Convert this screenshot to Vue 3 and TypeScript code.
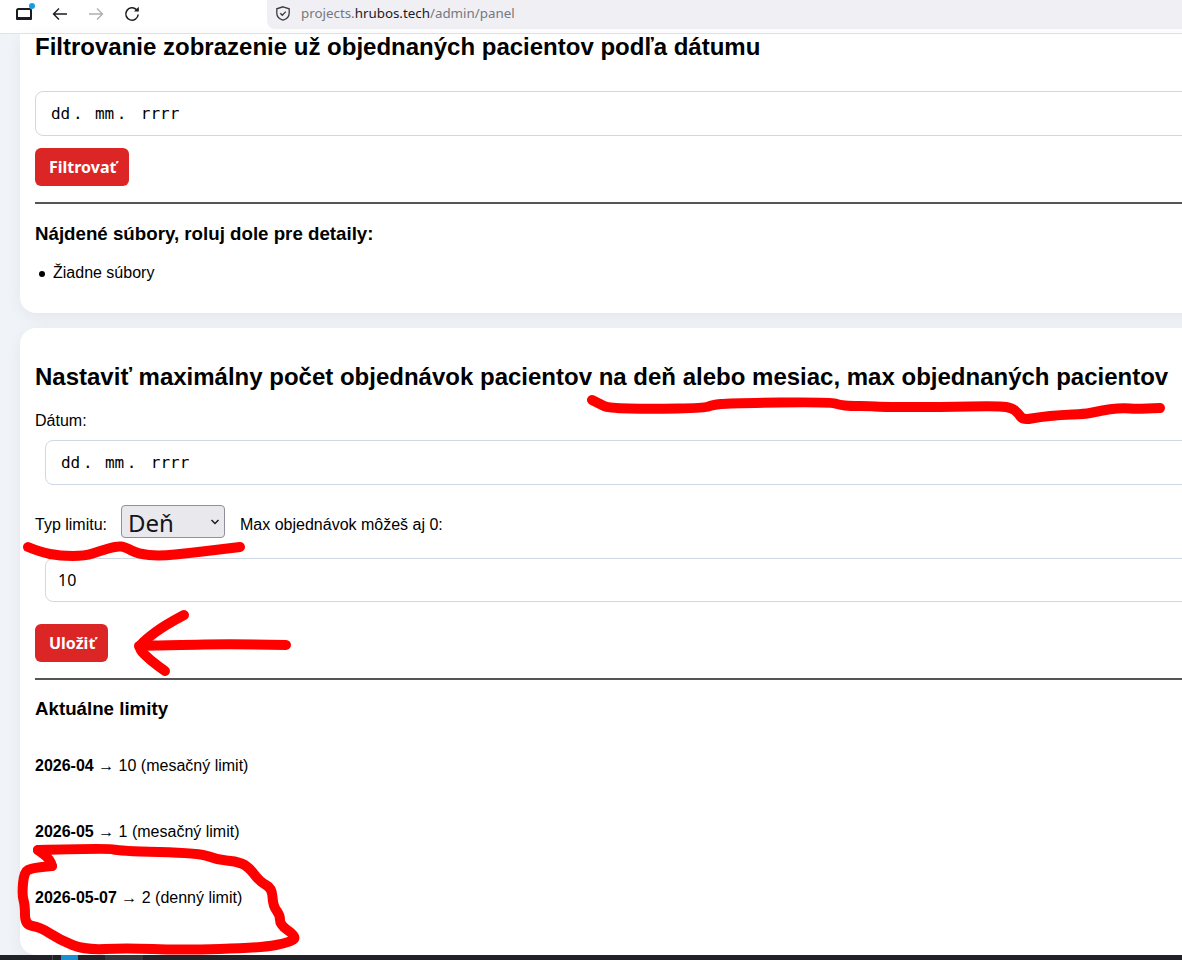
<script setup lang="ts">
type Pt = [number, number]

const limits = [
  { key: '2026-04', text: '10 (mesačný limit)' },
  { key: '2026-05', text: '1 (mesačný limit)' },
  { key: '2026-05-07', text: '2 (denný limit)' },
]

function smooth(pts: Pt[]): string {
  let d = `M${pts[0][0]} ${pts[0][1]}`
  for (let i = 1; i < pts.length - 1; i++) {
    const mx = (pts[i][0] + pts[i + 1][0]) / 2
    const my = (pts[i][1] + pts[i + 1][1]) / 2
    d += ` Q${pts[i][0]} ${pts[i][1]} ${mx} ${my}`
  }
  const last = pts[pts.length - 1]
  return `${d} L${last[0]} ${last[1]}`
}

const strokes: Pt[][] = [
  [[592, 400], [600, 404], [608, 408], [650, 409], [705, 408], [712, 405], [730, 403], [830, 402], [840, 405], [850, 406], [870, 406], [880, 407], [940, 407], [1000, 406], [1012, 408], [1018, 413], [1023, 420], [1040, 417], [1060, 415], [1085, 414], [1095, 412], [1110, 409], [1125, 408], [1135, 409], [1160, 408]],
  [[28, 547], [40, 552], [60, 556], [85, 556], [100, 551], [117, 546], [125, 547], [138, 554], [160, 556], [190, 553], [215, 550], [240, 547]],
  [[286, 645], [240, 644], [170, 645], [139, 646]],
  [[184, 615], [165, 625], [145, 640], [138, 648], [150, 660], [165, 671]],
  [[38, 850], [110, 848], [118, 851], [200, 853], [218, 860], [235, 861], [248, 866], [260, 882], [272, 888], [273, 906], [280, 915], [280, 925], [296, 936], [292, 942], [260, 948], [180, 950], [125, 948], [85, 950], [60, 940], [40, 927], [25, 925], [25, 905], [22, 895], [24, 872], [32, 868], [52, 866]],
  [[52, 866], [50, 859], [38, 850]],
]
const scribbles = strokes.map(smooth)
</script>

<template>
  <div class="page">
    <header class="browser">
      <div class="nav">
        <svg class="sidebar-btn" width="20" height="20" viewBox="0 0 20 20" fill="none">
          <rect x="2" y="5" width="14" height="9.5" rx="1.5" stroke="#1c1b22" stroke-width="2" />
          <rect x="1" y="13" width="16" height="3" rx="1" fill="#1c1b22" />
          <circle cx="17" cy="2" r="3" fill="#1a9be6" />
        </svg>
        <svg width="16" height="14" viewBox="0 0 16 14" fill="none" stroke="#1c1b22" stroke-width="1.4">
          <path d="M1.5 7 H15 M7 1.5 L1.5 7 L7 12.5" />
        </svg>
        <svg width="16" height="14" viewBox="0 0 16 14" fill="none" stroke="#b0b0b4" stroke-width="1.4">
          <path d="M14.5 7 H1 M9 1.5 L14.5 7 L9 12.5" />
        </svg>
        <svg width="16" height="16" viewBox="0 0 16 16" fill="none" stroke="#1c1b22" stroke-width="1.5">
          <path d="M12.4 3.6 A6.2 6.2 0 1 0 14.2 8.5" />
          <path d="M14.8 0.8 V5.6 H10" fill="#1c1b22" stroke="none" />
        </svg>
      </div>
      <div class="url">
        <svg width="14" height="15" viewBox="0 0 14 15" fill="none" stroke="#3a3a40" stroke-width="1.3">
          <path d="M7 0.8 L13.2 2.8 V7 C13.2 10.6 10.4 13.2 7 14.2 C3.6 13.2 0.8 10.6 0.8 7 V2.8 Z" />
          <path d="M4.3 7.2 L6.3 9.3 L9.8 5.6" />
        </svg>
        <span class="url-text">projects.<b>hrubos.tech</b>/admin/panel</span>
      </div>
    </header>

    <main class="content">
      <section class="card card-first">
        <h2 class="title">Filtrovanie zobrazenie už objednaných pacientov podľa dátumu</h2>
        <div class="field date"><span class="seg">dd</span>. <span class="seg">mm</span>. <span class="seg year">rrrr</span></div>
        <button class="btn btn-filter" type="button">Filtrovať</button>
        <hr class="rule rule-first" />
        <h3 class="sub">Nájdené súbory, roluj dole pre detaily:</h3>
        <ul class="files">
          <li><span class="bullet"></span>Žiadne súbory</li>
        </ul>
      </section>

      <section class="card card-second">
        <h2 class="title">Nastaviť maximálny počet objednávok pacientov na deň alebo mesiac, max objednaných pacientov</h2>
        <label class="date-label">Dátum:</label>
        <div class="field date inset"><span class="seg">dd</span>. <span class="seg">mm</span>. <span class="seg year">rrrr</span></div>
        <div class="limit-row">
          <label>Typ limitu:</label>
          <span class="select-wrap">
            <select class="select">
              <option>Deň</option>
              <option>Mesiac</option>
            </select>
            <svg class="chevron" width="10" height="6" viewBox="0 0 10 6" fill="none" stroke="#1c1b22" stroke-width="1.5">
              <path d="M1.5 1 L5 4.5 L8.5 1" />
            </svg>
          </span>
          <label>Max objednávok môžeš aj 0:</label>
        </div>
        <input class="field number inset" type="text" value="10" readonly />
        <button class="btn btn-save" type="button">Uložiť</button>
        <hr class="rule rule-second" />
        <h3 class="sub">Aktuálne limity</h3>
        <div class="limits">
          <p v-for="l in limits" :key="l.key"><strong>{{ l.key }}</strong> <span class="arrow">→</span> {{ l.text }}</p>
        </div>
      </section>
    </main>

    <footer class="taskbar">
      <span class="task-line"></span>
      <span class="task-blue"></span>
      <span class="task-gray"></span>
    </footer>

    <svg class="marks" width="1182" height="960" viewBox="0 0 1182 960" fill="none" stroke="#ff0000" stroke-width="10" stroke-linecap="round" stroke-linejoin="round">
      <path v-for="(d, i) in scribbles" :key="i" :d="d" />
    </svg>
  </div>
</template>

<style>
html, body { margin: 0; background: #f0f4f8; }
</style>

<style scoped>
.page {
  position: relative;
  width: 1182px;
  height: 960px;
  overflow: hidden;
  display: flex;
  flex-direction: column;
  background: #f0f4f8;
  font-family: "Liberation Sans", Arial, sans-serif;
  font-size: 16px;
  color: #000;
}
.browser {
  flex: none;
  height: 34px;
  background: #fff;
  display: flex;
  align-items: flex-start;
  box-sizing: border-box;
  border-bottom: 1px solid #e4e4e6;
}
.nav {
  display: flex;
  align-items: center;
  height: 27px;
  padding-left: 15px;
  width: 267px;
  box-sizing: border-box;
  flex: none;
}
.nav svg { display: block; flex: none; overflow: visible; }
.nav svg:nth-child(1) { margin-right: 17px; }
.nav svg:nth-child(2) { margin-right: 20px; }
.nav svg:nth-child(3) { margin-right: 20px; }
.url {
  flex: 1;
  height: 29px;
  background: #f0f0f4;
  border-radius: 0 0 0 8px;
  display: flex;
  align-items: center;
  padding: 0 0 3px 9px;
  box-sizing: border-box;
  gap: 11px;
}
.url svg { flex: none; display: block; }
.url-text { font-family: "Noto Sans", sans-serif; font-size: 13.35px; color: #77777d; white-space: nowrap; }
.url-text b { font-weight: 400; color: #1c1b22; }
.content {
  flex: 1;
  display: flex;
  flex-direction: column;
  gap: 15px;
  padding-left: 20px;
  min-height: 0;
}
.card {
  width: 1300px;
  box-sizing: border-box;
  background: #fff;
  border-radius: 16px;
  box-shadow: 0 4px 16px rgba(0, 0, 0, 0.06);
  padding: 0 15px;
  display: flex;
  flex-direction: column;
  align-items: flex-start;
}
.card-first { height: 279px; border-radius: 0 0 16px 16px; }
.card-second { height: 627px; }
.title { margin: 0; font-size: 24px; line-height: 28px; font-weight: 700; white-space: nowrap; }
.card-first .title { margin-top: -1px; }
.card-second .title { margin-top: 35px; }
.field {
  display: block;
  box-sizing: border-box;
  width: 1250px;
  background: #fff;
  border: 1px solid #ced9e3;
  border-radius: 8px;
  outline: none;
  color: #000;
}
.date {
  height: 45px;
  line-height: 43px;
  padding: 0 0 0 12.3px;
  font-family: "DejaVu Sans Mono", monospace;
  font-size: 16px;
  white-space: pre;
}
.seg { display: inline-block; padding: 0 2.7px; }
.year { margin-left: 2px; }
.card-first .date { margin-top: 30px; }
.inset { margin-left: 10px; }
.number {
  height: 44px;
  padding: 0 12px;
  font-family: "Noto Sans", sans-serif;
  font-size: 16px;
  margin-top: 20px;
}
.btn {
  border: none;
  background: #dc2626;
  color: #fff;
  border-radius: 6px;
  height: 38px;
  padding: 0 14px;
  font-family: "Noto Sans", sans-serif;
  font-size: 16px;
  font-weight: 700;
}
.btn-filter { margin-top: 12px; width: 94px; }
.btn-save { margin-top: 22px; width: 73px; }
.rule { width: 1250px; margin: 0; border: none; border-top: 2px solid #555; }
.rule-first { margin-top: 16px; }
.rule-second { margin-top: 16px; }
.sub { margin: 0; font-size: 18.72px; line-height: 22px; font-weight: 700; }
.rule-first + .sub { margin-top: 19px; }
.rule-second + .sub { margin-top: 18px; }
.files { margin: 17px 0 0; padding: 0 0 0 4px; line-height: 22px; list-style: none; }
.files li { display: flex; align-items: center; gap: 8px; }
.bullet { width: 6px; height: 6px; border-radius: 50%; background: #000; margin-top: 1px; }
.date-label { margin-top: 21px; line-height: 18px; }
.card-second .date { margin-top: 10px; }
.limit-row { margin-top: 20px; display: flex; align-items: center; height: 33px; }
.limit-row label { line-height: 18px; position: relative; top: 3px; }
.select-wrap { position: relative; display: block; width: 104px; height: 33px; margin: 0 15px 0 14px; }
.select {
  appearance: none;
  display: block;
  width: 104px;
  height: 33px;
  box-sizing: border-box;
  background: #e9e9ed;
  border: 1px solid #8f8f9d;
  border-radius: 4px;
  padding: 0 6px 4px;
  font-family: "Noto Sans", sans-serif;
  font-size: 24px;
  color: #15141a;
}
.chevron { position: absolute; right: 5px; top: 14px; pointer-events: none; }
.limits { margin-top: 37px; display: flex; flex-direction: column; gap: 48px; }
.limits p { margin: 0; line-height: 18px; }
.arrow { font-size: 16px; }
.taskbar {
  position: absolute;
  left: 0;
  right: 0;
  bottom: 0;
  height: 5px;
  background: #202228;
}
.task-line { position: absolute; left: 52px; top: 0; width: 1px; height: 5px; background: #4a4c52; }
.task-blue { position: absolute; left: 61px; top: 0; width: 17px; height: 5px; background: #1d8fd1; }
.task-gray { position: absolute; left: 105px; top: 0; width: 38px; height: 5px; background: #34363c; }
.marks { position: absolute; left: 0; top: 0; pointer-events: none; }
</style>
